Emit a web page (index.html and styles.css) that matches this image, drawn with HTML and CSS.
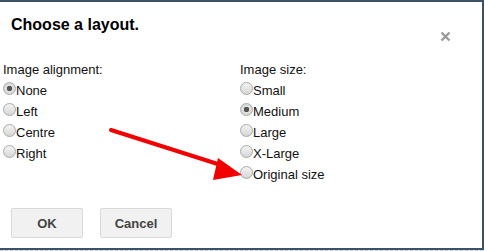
FILE: index.html
```html
<!DOCTYPE html>
<html lang="en">
<head>
    <meta charset="UTF-8">
    <title>Choose a layout</title>
    <link rel="stylesheet" href="styles.css">
</head>
<body>
    <div class="dialog">
        <div class="dialog-head">
            <h2 class="dialog-title">Choose a layout.</h2>
            <svg class="dialog-close" width="11" height="11" viewBox="0 0 11 11">
                <path d="M1.5 1.5L9.5 9.5M9.5 1.5L1.5 9.5" stroke="#9a9a9a" stroke-width="2.4"/>
            </svg>
        </div>
        <div class="dialog-body">
            <div class="option-group">
                <div class="group-label">Image alignment:</div>
                <label class="option"><input type="radio" name="align" checked>None</label>
                <label class="option"><input type="radio" name="align">Left</label>
                <label class="option"><input type="radio" name="align">Centre</label>
                <label class="option"><input type="radio" name="align">Right</label>
            </div>
            <div class="option-group">
                <div class="group-label">Image size:</div>
                <label class="option"><input type="radio" name="size">Small</label>
                <label class="option"><input type="radio" name="size" checked>Medium</label>
                <label class="option"><input type="radio" name="size">Large</label>
                <label class="option"><input type="radio" name="size">X-Large</label>
                <label class="option"><input type="radio" name="size">Original size</label>
            </div>
        </div>
        <div class="dialog-buttons">
            <button class="btn">OK</button>
            <button class="btn">Cancel</button>
        </div>
        <!-- flecha roja de la captura -->
        <svg class="arrow" width="485" height="251" viewBox="0 0 485 251">
            <line x1="111" y1="130" x2="224" y2="166" stroke="#f20000" stroke-width="4" stroke-linecap="round"/>
            <polygon points="242,175 218,158 213,180" fill="#f20000"/>
        </svg>
    </div>
    <div class="page-strip"></div>
</body>
</html>
```

FILE: styles.css
```css
body {
    margin: 0;
    background: #ffffff;
    font-family: "Liberation Sans", Arial, sans-serif;
    color: #111;
    width: 485px;
    height: 251px;
    overflow: hidden;
}

.dialog {
    position: relative;
    box-sizing: border-box;
    width: 484px;
    height: 250px;
    border-top: 2px solid #3b5168;
    border-right: 2px solid #3b5168;
    border-bottom: 2px solid #3b5168;
    background: #ffffff;
}

.dialog-head {
    display: flex;
    justify-content: space-between;
    padding: 13px 31px 0 11px;
    height: 45px;
    box-sizing: border-box;
}

.dialog-title {
    margin: 0;
    font-size: 16px;
    font-weight: bold;
    line-height: 20px;
    color: #000;
}

.dialog-close {
    margin-top: 16px;
}

.dialog-body {
    display: grid;
    grid-template-columns: 237px 1fr;
    padding: 12px 0 0 3px;
    font-size: 13px;
    line-height: 21px;
}

.option-group {
    display: flex;
    flex-direction: column;
}

.option {
    display: flex;
    align-items: center;
    height: 21px;
}

.option input {
    appearance: none;
    -webkit-appearance: none;
    width: 13px;
    height: 13px;
    margin: 0 0 0 0;
    border-radius: 50%;
    border: 1px solid #a9a9a9;
    background: linear-gradient(#f4f4f4, #d6d6d6);
    box-sizing: border-box;
    position: relative;
    top: -2px;
}

.option input:checked {
    background: radial-gradient(circle, #555 0, #555 2.5px, #e0e0e0 3px, #d0d0d0 100%);
}

.dialog-buttons {
    display: flex;
    gap: 17px;
    padding: 0 0 0 11px;
    position: absolute;
    top: 206px;
    left: 0;
}

.btn {
    width: 72px;
    height: 30px;
    background: #f1f1f1;
    border: 1px solid #d9d9d9;
    border-radius: 2px;
    font-family: "Liberation Sans", Arial, sans-serif;
    font-size: 13px;
    font-weight: bold;
    color: #444;
    padding: 0;
}

.arrow {
    position: absolute;
    top: -2px;
    left: 0;
    pointer-events: none;
}

.page-strip {
    height: 1px;
    width: 485px;
    background: repeating-linear-gradient(90deg, #c9ccd2 0, #c9ccd2 3px, #eef0f3 3px, #eef0f3 5px);
}
```
